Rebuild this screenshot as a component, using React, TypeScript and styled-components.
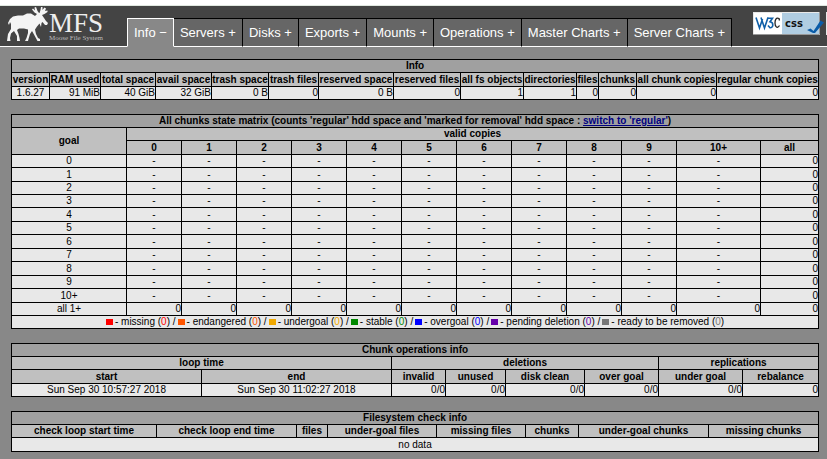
import React from "react";
import styled, { createGlobalStyle, css } from "styled-components";

const GlobalStyle = createGlobalStyle`
  *, *::before, *::after { box-sizing: border-box; }
  body {
    margin: 0;
    background: #888888;
    color: #000000;
    font-family: "Liberation Sans", Arial, sans-serif;
    font-size: 10px;
  }
`;

const Page = styled.div`
  border-top: 5px solid #ffffff;
`;

const Header = styled.header`
  display: flex;
  height: 42px;
  padding-left: 6px;
  background: #444444;
  border-top: 1px solid #e0e8e0;
  box-shadow: inset 0 -1px 0 #ffffff;
  overflow: hidden;
`;

const Logo = styled.a`
  display: flex;
  flex: none;
  width: 121px;
  color: #eeeeee;
  text-decoration: none;
`;

const Moose = styled.svg`
  flex: none;
  width: 43px;
  height: 36px;
`;

const LogoText = styled.span`
  display: flex;
  flex-direction: column;
  padding-top: 7px;
  font-family: "Liberation Serif", "Times New Roman", serif;
  white-space: nowrap;
`;

const LogoName = styled.span`
  font-size: 27px;
  line-height: 21px;
`;

const LogoCaption = styled.span`
  color: #bbbbbb;
  font-size: 7px;
  line-height: 8px;
`;

const Tabs = styled.nav`
  display: flex;
  flex: none;
  align-self: flex-end;
  height: 29px;
`;

const Tab = styled.a<{ $active?: boolean }>`
  display: flex;
  align-items: center;
  padding: 0 6px;
  border: 1px solid #000000;
  border-left-width: 0;
  border-bottom-color: #ffffff;
  background: #666666;
  color: #ffffff;
  font-size: 13px;
  line-height: 16px;
  white-space: nowrap;
  text-decoration: none;
  ${(p) =>
    p.$active &&
    css`
      border-color: #ffffff;
      border-left-width: 1px;
      border-bottom-color: #888888;
      background: #888888;
    `}
`;

const Badges = styled.div`
  display: flex;
  flex: none;
  gap: 2px;
  margin-left: auto;
  padding-top: 6px;
`;

const Badge = styled.a`
  display: block;
  height: 27px;
`;

const BadgeArt = styled.svg`
  display: block;
  width: 71px;
  height: 27px;
`;

const BadgeEdge = styled.span`
  width: 1px;
  height: 23px;
  background: #e9e9e9;
`;

const Main = styled.main`
  display: flex;
  flex-direction: column;
  gap: 14px;
  padding: 12px 8px 6px 11px;
`;

const Grid = styled.table`
  width: 100%;
  table-layout: fixed;
  border-collapse: separate;
  border-spacing: 0;
  border: solid #000000;
  border-width: 1px 0 0 1px;
`;

const Row = styled.tr<{ $tall?: boolean }>`
  height: ${(p) => (p.$tall ? 14 : 13)}px;
  background: #e8e8e8;
`;

const cell = css`
  padding: 0;
  border: solid #000000;
  border-width: 0 1px 1px 0;
  line-height: 12px;
  white-space: nowrap;
`;

const Title = styled.th`
  ${cell}
  background: #a0a0a0;
`;

const Head = styled.th`
  ${cell}
  background: #c0c0c0;
`;

const Cell = styled.td<{ $right?: boolean }>`
  ${cell}
  text-align: ${(p) => (p.$right ? "right" : "center")};
`;

const SwitchLink = styled.a`
  color: #000080;
`;

const Legend = styled.div`
  display: flex;
  justify-content: center;
  gap: 2px;
`;

const LegendItem = styled.span`
  display: flex;
  align-items: center;
  gap: 2px;
`;

const Swatch = styled.span<{ $color: string }>`
  width: 7px;
  height: 6px;
  background: ${(p) => p.$color};
`;

const Count = styled.span<{ $color: string }>`
  color: ${(p) => p.$color};
`;

const tabs = ["Info −", "Servers +", "Disks +", "Exports +", "Mounts +", "Operations +", "Master Charts +", "Server Charts +"];

const infoColumns = [
  { name: "version", value: "1.6.27", width: 38 },
  { name: "RAM used", value: "91 MiB", width: 51 },
  { name: "total space", value: "40 GiB", width: 55 },
  { name: "avail space", value: "32 GiB", width: 56 },
  { name: "trash space", value: "0 B", width: 57 },
  { name: "trash files", value: "0", width: 50 },
  { name: "reserved space", value: "0 B", width: 75 },
  { name: "reserved files", value: "0", width: 67 },
  { name: "all fs objects", value: "1", width: 63 },
  { name: "directories", value: "1", width: 53 },
  { name: "files", value: "0", width: 22 },
  { name: "chunks", value: "0", width: 38 },
  { name: "all chunk copies", value: "0", width: 80 },
  { name: "regular chunk copies", value: "0", width: 102 },
];

const copies = ["0", "1", "2", "3", "4", "5", "6", "7", "8", "9", "10+"];
const tallGoals = ["1", "4", "6", "8", "10+"];

const states = [
  { name: "missing", color: "#ff0000" },
  { name: "endangered", color: "#ff5500" },
  { name: "undergoal", color: "#f0a800" },
  { name: "stable", color: "#008800" },
  { name: "overgoal", color: "#0000ff" },
  { name: "pending deletion", color: "#6600aa" },
  { name: "ready to be removed", color: "#777777" },
];

const checkColumns = [
  { name: "check loop start time", width: 145 },
  { name: "check loop end time", width: 140 },
  { name: "files", width: 31 },
  { name: "under-goal files", width: 109 },
  { name: "missing files", width: 89 },
  { name: "chunks", width: 53 },
  { name: "under-goal chunks", width: 130 },
  { name: "missing chunks", width: 110 },
];

function Columns({ widths }: { widths: number[] }) {
  return (
    <colgroup>
      {widths.map((w, i) => (
        <col key={i} width={w} />
      ))}
    </colgroup>
  );
}

function InfoTable() {
  return (
    <Grid>
      <Columns widths={infoColumns.map((c) => c.width)} />
      <thead>
        <Row><Title colSpan={14}>Info</Title></Row>
        <Row $tall>{infoColumns.map((c) => <Head key={c.name}>{c.name}</Head>)}</Row>
      </thead>
      <tbody>
        <Row>{infoColumns.map((c, i) => <Cell key={c.name} $right={i > 0}>{c.value}</Cell>)}</Row>
      </tbody>
    </Grid>
  );
}

function MatrixTable() {
  return (
    <Grid>
      <Columns widths={[115, 55, 55, 55, 55, 55, 55, 55, 55, 55, 55, 84, 58]} />
      <thead>
        <Row>
          <Title colSpan={13}>
            All chunks state matrix (counts 'regular' hdd space and 'marked for removal' hdd space :{" "}
            <SwitchLink href="#regular">switch to 'regular'</SwitchLink>)
          </Title>
        </Row>
        <Row>
          <Head rowSpan={2}>goal</Head>
          <Head colSpan={12}>valid copies</Head>
        </Row>
        <Row $tall>
          {copies.map((c) => <Head key={c}>{c}</Head>)}
          <Head>all</Head>
        </Row>
      </thead>
      <tbody>
        {copies.map((goal) => (
          <Row key={goal} $tall={tallGoals.includes(goal)}>
            <Cell>{goal}</Cell>
            {copies.map((c) => <Cell key={c}>-</Cell>)}
            <Cell $right>0</Cell>
          </Row>
        ))}
        <Row>
          <Cell>all 1+</Cell>
          {copies.map((c) => <Cell key={c} $right>0</Cell>)}
          <Cell $right>0</Cell>
        </Row>
        <Row>
          <Cell colSpan={13}>
            <Legend>
              {states.map((s, i) => (
                <LegendItem key={s.name}>
                  <Swatch $color={s.color} />
                  <span>
                    - {s.name} (<Count $color={s.color}>0</Count>){i < states.length - 1 && " /"}
                  </span>
                </LegendItem>
              ))}
            </Legend>
          </Cell>
        </Row>
      </tbody>
    </Grid>
  );
}

function OperationsTable() {
  return (
    <Grid>
      <Columns widths={[190, 190, 54, 60, 79, 74, 84, 76]} />
      <thead>
        <Row><Title colSpan={8}>Chunk operations info</Title></Row>
        <Row>
          <Head colSpan={2}>loop time</Head>
          <Head colSpan={4}>deletions</Head>
          <Head colSpan={2}>replications</Head>
        </Row>
        <Row $tall>
          {["start", "end", "invalid", "unused", "disk clean", "over goal", "under goal", "rebalance"].map((h) => (
            <Head key={h}>{h}</Head>
          ))}
        </Row>
      </thead>
      <tbody>
        <Row>
          <Cell>Sun Sep 30 10:57:27 2018</Cell>
          <Cell>Sun Sep 30 11:02:27 2018</Cell>
          {["0/0", "0/0", "0/0", "0/0", "0/0", "0"].map((v, i) => <Cell key={i} $right>{v}</Cell>)}
        </Row>
      </tbody>
    </Grid>
  );
}

function CheckTable() {
  return (
    <Grid>
      <Columns widths={checkColumns.map((c) => c.width)} />
      <thead>
        <Row><Title colSpan={8}>Filesystem check info</Title></Row>
        <Row>{checkColumns.map((c) => <Head key={c.name}>{c.name}</Head>)}</Row>
      </thead>
      <tbody>
        <Row $tall><Cell colSpan={8}>no data</Cell></Row>
      </tbody>
    </Grid>
  );
}

function MooseIcon() {
  return (
    <Moose viewBox="6 6 43 36" fill="#f4f4f4" aria-hidden="true">
      <path d="M10 19 L13 16.500 L18 15.500 L23 15.500 L27 13.500 L31 13.500 L35 16 L37 14 L34.500 12.500 L32 9.500 L33 8.500 L35 10.500 L34.500 7.500 L36 7 L37.500 11 L39 13 L39.500 13 L40.500 10 L41 7 L42.500 7 L42.500 10 L44.500 7.500 L46 8.500 L45 11 L47.500 10.500 L47.500 12 L44.500 14 L42 15 L44 18 L46 21 L48 23 L47 25 L45 25 L42.500 22 L41.500 23 L41 27 L39.500 23.500 L37 26.500 L35 29.500 L36 34 L38 38 L40 39 L40 41 L37.500 41 L34 34.500 L32 31 L30 34 L28.500 39 L28 41 L25 41 L26.500 38 L28 33 L28 29.500 L24 28.500 L19 28.500 L17 30 L18.500 34 L19.500 38 L20 41 L17 41 L17 36 L14 31 L11 33.500 L10 38 L10.500 41 L7 41 L8 34 L11 29 L11 24 L10 22 L9 25 L8 23 Z" />
    </Moose>
  );
}

function CssBadge() {
  return (
    <BadgeArt viewBox="0 0 71 27" role="img" aria-label="Valid CSS">
      <rect width="67" height="23" fill="#e9e9e9" />
      <rect x="1" y="1" width="28" height="21" fill="#ffffff" />
      <rect x="29" y="1" width="37" height="21" fill="#b0cde2" />
      <path d="M66.500 0V22.500H0" fill="none" stroke="#999999" />
      <path d="M3 5.500 L6.500 16 L9.500 7 M8 5.500 L11.500 16 L15 5.500" fill="none" stroke="#0f5fa8" strokeWidth="1.600" />
      <path d="M14.500 6.200 H19.500 L17 9.800 C21 10.500 20.500 16 17 15.800 L15 13.500" fill="none" stroke="#0f5fa8" strokeWidth="1.600" />
      <path d="M26.500 8.500 L26 6.500 C23 5 22 8 22 11 C22 14 24 17.500 26.500 13.500" fill="none" stroke="#222222" strokeWidth="1.300" />
      <text x="32" y="15" fontFamily="DejaVu Sans" fontWeight="700" fontSize="10" fill="#111111">css</text>
      <path d="M54 18 L57.500 16.500 L60.500 19 L67.500 8.500 L71 10.500 L62 21 L60 21 Z" fill="#0b5ca8" />
    </BadgeArt>
  );
}

export default function App() {
  return (
    <Page>
      <GlobalStyle />
      <Header>
        <Logo href="#home">
          <MooseIcon />
          <LogoText>
            <LogoName>MFS</LogoName>
            <LogoCaption>Moose File System</LogoCaption>
          </LogoText>
        </Logo>
        <Tabs>
          {tabs.map((t, i) => <Tab key={t} href="#tab" $active={i === 0}>{t}</Tab>)}
        </Tabs>
        <Badges>
          <Badge href="#css"><CssBadge /></Badge>
          <BadgeEdge />
        </Badges>
      </Header>
      <Main>
        <InfoTable />
        <MatrixTable />
        <OperationsTable />
        <CheckTable />
      </Main>
    </Page>
  );
}
